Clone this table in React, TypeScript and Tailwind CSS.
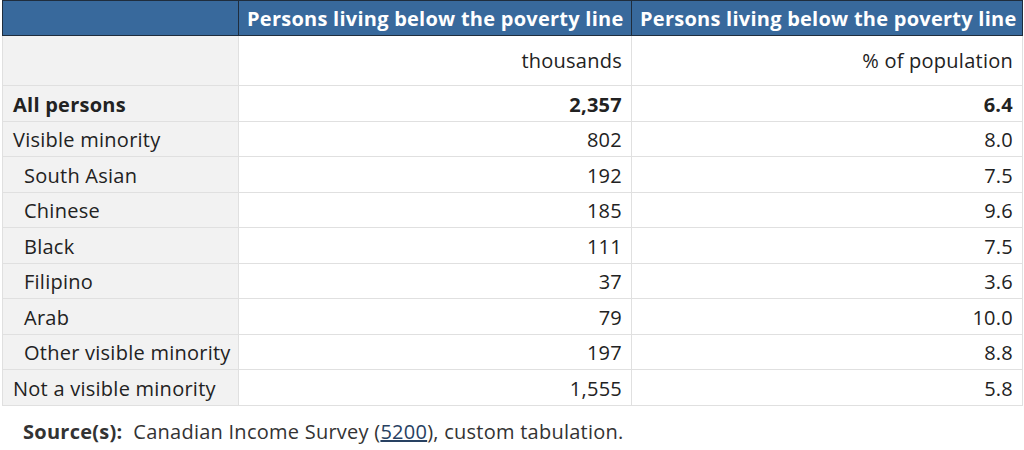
const rows = [
  { label: "All persons", a: "2,357", b: "6.4", bold: true, indent: false },
  { label: "Visible minority", a: "802", b: "8.0", bold: false, indent: false },
  { label: "South Asian", a: "192", b: "7.5", bold: false, indent: true },
  { label: "Chinese", a: "185", b: "9.6", bold: false, indent: true },
  { label: "Black", a: "111", b: "7.5", bold: false, indent: true },
  { label: "Filipino", a: "37", b: "3.6", bold: false, indent: true },
  { label: "Arab", a: "79", b: "10.0", bold: false, indent: true },
  { label: "Other visible minority", a: "197", b: "8.8", bold: false, indent: true },
  { label: "Not a visible minority", a: "1,555", b: "5.8", bold: false, indent: false },
];

export default function App() {
  return (
    <div className="bg-white w-[1024px] h-[450px] pl-[2px] pr-[2px] text-[20px] tracking-[0.25px] text-[#222] font-['Open_Sans',sans-serif]">
      <table className="w-[1020px] border-collapse table-fixed">
        <colgroup>
          <col className="w-[236px]" />
          <col className="w-[393px]" />
          <col className="w-[391px]" />
        </colgroup>
        <thead>
          <tr className="bg-[#38699c] text-white h-[35px]">
            <th className="border border-[#1f2d3d]" />
            <th className="border border-[#1f2d3d] px-[8px] text-right font-bold leading-tight whitespace-nowrap">
              Persons living below the poverty line
            </th>
            <th className="border border-[#1f2d3d] px-[8px] text-right font-bold leading-tight whitespace-nowrap">
              Persons living below the poverty line
            </th>
          </tr>
        </thead>
        <tbody>
          <tr className="h-[50px]">
            <td className="bg-[#f2f2f2] border border-[#e0e0e0]" />
            <td className="border border-[#e0e0e0] px-[9px] text-right">thousands</td>
            <td className="border border-[#e0e0e0] px-[9px] text-right">% of population</td>
          </tr>
          {rows.map((r) => (
            <tr key={r.label} className={`h-[35.5px] leading-tight ${r.bold ? "font-bold" : ""}`}>
              <td className={`bg-[#f2f2f2] border border-[#e0e0e0] whitespace-nowrap pt-[2px] ${r.indent ? "pl-[21px]" : "pl-[10px]"}`}>
                {r.label}
              </td>
              <td className="border border-[#e0e0e0] px-[9px] pt-[2px] text-right">{r.a}</td>
              <td className="border border-[#e0e0e0] px-[9px] pt-[2px] text-right">{r.b}</td>
            </tr>
          ))}
        </tbody>
      </table>
      <p className="pl-[21px] pt-[11px] text-[#333]">
        <span className="font-bold">Source(s):</span>&nbsp; Canadian Income Survey (
        <a className="text-[#284162] underline">5200</a>), custom tabulation.
      </p>
    </div>
  );
}
